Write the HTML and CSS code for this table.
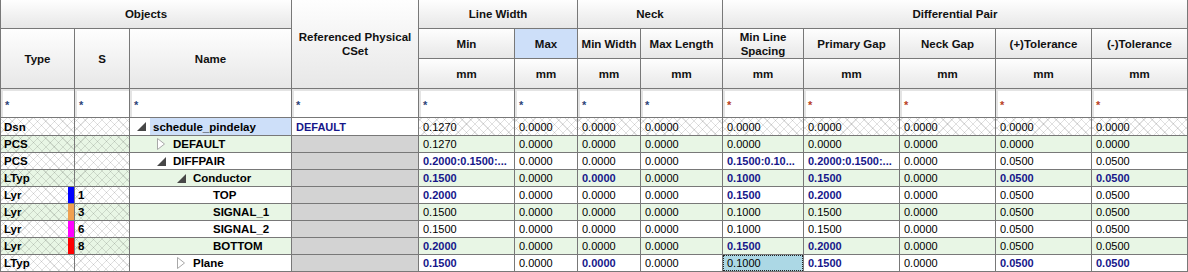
FILE: index.html
```html
<!DOCTYPE html>
<html>
<head>
<meta charset="utf-8">
<link rel="stylesheet" href="styles.css">
</head>
<body>
<div class="grid">
  <div class="hd r1 s3">Objects</div>
  <div class="hd cset-h">Referenced Physical CSet</div>
  <div class="hd r1 s2">Line Width</div>
  <div class="hd r1 s2">Neck</div>
  <div class="hd r1 s5">Differential Pair</div>
  <div class="hd col1 r23">Type</div>
  <div class="hd col2 r23">S</div>
  <div class="hd col3 r23">Name</div>
  <div class="hd r2">Min</div>
  <div class="hd r2 hl">Max</div>
  <div class="hd r2">Min Width</div>
  <div class="hd r2">Max Length</div>
  <div class="hd r2">Min Line Spacing</div>
  <div class="hd r2">Primary Gap</div>
  <div class="hd r2">Neck Gap</div>
  <div class="hd r2">(+)Tolerance</div>
  <div class="hd r2">(-)Tolerance</div>
  <div class="hd r3">mm</div>
  <div class="hd r3">mm</div>
  <div class="hd r3">mm</div>
  <div class="hd r3">mm</div>
  <div class="hd r3">mm</div>
  <div class="hd r3">mm</div>
  <div class="hd r3">mm</div>
  <div class="hd r3">mm</div>
  <div class="hd r3">mm</div>

  <div class="flt"><span class="ast">*</span></div>
  <div class="flt"><span class="ast">*</span></div>
  <div class="flt"><span class="ast">*</span></div>
  <div class="flt"><span class="ast">*</span></div>
  <div class="flt"><span class="ast">*</span></div>
  <div class="flt"><span class="ast">*</span></div>
  <div class="flt"><span class="ast">*</span></div>
  <div class="flt"><span class="ast">*</span></div>
  <div class="flt"><span class="ast red">*</span></div>
  <div class="flt"><span class="ast red">*</span></div>
  <div class="flt"><span class="ast red">*</span></div>
  <div class="flt"><span class="ast red">*</span></div>
  <div class="flt"><span class="ast red">*</span></div>

  <div class="row">
    <div class="c t hx">Dsn</div>
    <div class="c t hx"></div>
    <div class="nm l0"><span class="tw"><svg width="9" height="9" viewBox="0 0 9 9"><polygon points="9,0 9,9 0,9" fill="#474747"/></svg></span><span class="nt selname">schedule_pindelay</span></div>
    <div class="c b">DEFAULT</div>
    <div class="c hx">0.1270</div>
    <div class="c hx">0.0000</div>
    <div class="c hx">0.0000</div>
    <div class="c hx">0.0000</div>
    <div class="c hx">0.0000</div>
    <div class="c hx">0.0000</div>
    <div class="c hx">0.0000</div>
    <div class="c hx">0.0000</div>
    <div class="c hx">0.0000</div>
  </div>

  <div class="row alt">
    <div class="c t hx">PCS</div>
    <div class="c t hx"></div>
    <div class="nm l1"><span class="tw"><svg width="8" height="12" viewBox="0 0 8 12"><polygon points="0.5,0.5 7.5,6 0.5,11.5" fill="#fff" stroke="#a8a8a8"/></svg></span><span class="nt">DEFAULT</span></div>
    <div class="c cs"></div>
    <div class="c">0.1270</div>
    <div class="c">0.0000</div>
    <div class="c">0.0000</div>
    <div class="c">0.0000</div>
    <div class="c">0.0000</div>
    <div class="c">0.0000</div>
    <div class="c">0.0000</div>
    <div class="c">0.0000</div>
    <div class="c">0.0000</div>
  </div>

  <div class="row">
    <div class="c t hx">PCS</div>
    <div class="c t hx"></div>
    <div class="nm l1"><span class="tw"><svg width="9" height="9" viewBox="0 0 9 9"><polygon points="9,0 9,9 0,9" fill="#474747"/></svg></span><span class="nt">DIFFPAIR</span></div>
    <div class="c cs"></div>
    <div class="c b">0.2000:0.1500:...</div>
    <div class="c">0.0000</div>
    <div class="c">0.0000</div>
    <div class="c">0.0000</div>
    <div class="c b">0.1500:0.10...</div>
    <div class="c b">0.2000:0.1500:...</div>
    <div class="c">0.0000</div>
    <div class="c">0.0500</div>
    <div class="c">0.0500</div>
  </div>

  <div class="row alt">
    <div class="c t hx">LTyp</div>
    <div class="c t hx"></div>
    <div class="nm l2"><span class="tw"><svg width="9" height="9" viewBox="0 0 9 9"><polygon points="9,0 9,9 0,9" fill="#474747"/></svg></span><span class="nt">Conductor</span></div>
    <div class="c cs"></div>
    <div class="c b">0.1500</div>
    <div class="c">0.0000</div>
    <div class="c b">0.0000</div>
    <div class="c">0.0000</div>
    <div class="c b">0.1000</div>
    <div class="c b">0.1500</div>
    <div class="c">0.0000</div>
    <div class="c b">0.0500</div>
    <div class="c b">0.0500</div>
  </div>

  <div class="row">
    <div class="c t hx bar-blue">Lyr</div>
    <div class="c t hx">1</div>
    <div class="nm l3"><span class="tw"></span><span class="nt">TOP</span></div>
    <div class="c cs"></div>
    <div class="c b">0.2000</div>
    <div class="c">0.0000</div>
    <div class="c">0.0000</div>
    <div class="c">0.0000</div>
    <div class="c b">0.1500</div>
    <div class="c b">0.2000</div>
    <div class="c">0.0000</div>
    <div class="c">0.0500</div>
    <div class="c">0.0500</div>
  </div>

  <div class="row alt">
    <div class="c t hx bar-orange">Lyr</div>
    <div class="c t hx">3</div>
    <div class="nm l3"><span class="tw"></span><span class="nt">SIGNAL_1</span></div>
    <div class="c cs"></div>
    <div class="c">0.1500</div>
    <div class="c">0.0000</div>
    <div class="c">0.0000</div>
    <div class="c">0.0000</div>
    <div class="c">0.1000</div>
    <div class="c">0.1500</div>
    <div class="c">0.0000</div>
    <div class="c">0.0500</div>
    <div class="c">0.0500</div>
  </div>

  <div class="row">
    <div class="c t hx bar-magenta">Lyr</div>
    <div class="c t hx">6</div>
    <div class="nm l3"><span class="tw"></span><span class="nt">SIGNAL_2</span></div>
    <div class="c cs"></div>
    <div class="c">0.1500</div>
    <div class="c">0.0000</div>
    <div class="c">0.0000</div>
    <div class="c">0.0000</div>
    <div class="c">0.1000</div>
    <div class="c">0.1500</div>
    <div class="c">0.0000</div>
    <div class="c">0.0500</div>
    <div class="c">0.0500</div>
  </div>

  <div class="row alt">
    <div class="c t hx bar-red">Lyr</div>
    <div class="c t hx">8</div>
    <div class="nm l3"><span class="tw"></span><span class="nt">BOTTOM</span></div>
    <div class="c cs"></div>
    <div class="c b">0.2000</div>
    <div class="c">0.0000</div>
    <div class="c">0.0000</div>
    <div class="c">0.0000</div>
    <div class="c b">0.1500</div>
    <div class="c b">0.2000</div>
    <div class="c">0.0000</div>
    <div class="c">0.0500</div>
    <div class="c">0.0500</div>
  </div>

  <div class="row">
    <div class="c t hx">LTyp</div>
    <div class="c t hx"></div>
    <div class="nm l2"><span class="tw"><svg width="8" height="12" viewBox="0 0 8 12"><polygon points="0.5,0.5 7.5,6 0.5,11.5" fill="#fff" stroke="#a8a8a8"/></svg></span><span class="nt">Plane</span></div>
    <div class="c cs"></div>
    <div class="c b">0.1500</div>
    <div class="c">0.0000</div>
    <div class="c b">0.0000</div>
    <div class="c">0.0000</div>
    <div class="c sel">0.1000</div>
    <div class="c b">0.1500</div>
    <div class="c">0.0000</div>
    <div class="c b">0.0500</div>
    <div class="c b">0.0500</div>
  </div>
</div>
</body>
</html>
```

FILE: styles.css
```css
body {
  margin: 0;
  background: #ffffff;
  font-family: "Liberation Sans", Arial, sans-serif;
  font-size: 11px;
  color: #000000;
}

.grid {
  display: grid;
  grid-template-columns: 73px 54px 161px 126px 95px 62px 62px 81px 80px 95px 95px 95px 95px;
  grid-template-rows: 28px 29px 29px 28px 17px repeat(8, 16px);
  gap: 1px;
  padding: 0 1px 1px 1px;
  background: #787878;
  width: max-content;
}

/* header */
.hd {
  display: flex;
  align-items: center;
  justify-content: center;
  text-align: center;
  font-weight: bold;
  font-size: 11.5px;
  line-height: 14px;
  background: linear-gradient(#fefefe, #e7e7e7);
  color: #111;
}
.hd.hl { background: #cddff9; }
.r1 { grid-row: 1; }
.r2 { grid-row: 2; }
.r3 { grid-row: 3; }
.r23 { grid-row: 2 / 4; }
.s2 { grid-column: span 2; }
.s3 { grid-column: span 3; }
.s5 { grid-column: span 5; }
.col1 { grid-column: 1; }
.col2 { grid-column: 2; }
.col3 { grid-column: 3; }
.cset-h { grid-column: 4; grid-row: 1 / 4; padding: 0 6px; }

/* filter row */
.flt {
  background: #ffffff;
  box-shadow: inset 2px 2px 0 #e4e4e4;
  display: flex;
  align-items: center;
  padding-left: 4px;
}
.ast {
  font-size: 11px;
  font-weight: bold;
  line-height: 10px;
  color: #2c4478;
  margin-top: 4px;
}
.ast.red { color: #b8401e; }

/* data rows */
.row { display: contents; }
.row > * { background-color: #ffffff; }
.row.alt > * { background-color: #e8f6e5; }

.c {
  display: flex;
  align-items: center;
  padding-left: 4px;
  white-space: nowrap;
  overflow: hidden;
  line-height: 14px;
}
.c.t { padding-left: 3px; font-weight: bold; font-size: 11.5px; }
.c.b { color: #16168a; font-weight: bold; }

.hx {
  background-image:
    repeating-linear-gradient(45deg, transparent 0 5px, rgba(0, 0, 0, 0.12) 5px 6px),
    repeating-linear-gradient(-45deg, transparent 0 5px, rgba(0, 0, 0, 0.12) 5px 6px);
}

.row > .cs { background-color: #d3d3d3; }
.row > .sel {
  background-color: #acd8e5;
  outline: 1px dotted #222;
  outline-offset: -1px;
}

.bar-blue { box-shadow: inset -6px 0 0 #0000ff; }
.bar-orange { box-shadow: inset -6px 0 0 #f0a050; }
.bar-magenta { box-shadow: inset -6px 0 0 #ff00ff; }
.bar-red { box-shadow: inset -6px 0 0 #ff0000; }

/* name tree */
.nm {
  display: flex;
  align-items: stretch;
  white-space: nowrap;
  overflow: hidden;
}
.nm.l0 { padding-left: 7px; }
.nm.l1 { padding-left: 27px; }
.nm.l2 { padding-left: 47px; }
.nm.l3 { padding-left: 67px; }
.tw {
  width: 13px;
  flex: none;
  display: flex;
  align-items: center;
}
.nt {
  flex: 1;
  display: flex;
  align-items: center;
  padding-left: 3px;
  font-weight: bold;
  font-size: 11.5px;
}
.nt.selname { background: #cddff9; }
```
